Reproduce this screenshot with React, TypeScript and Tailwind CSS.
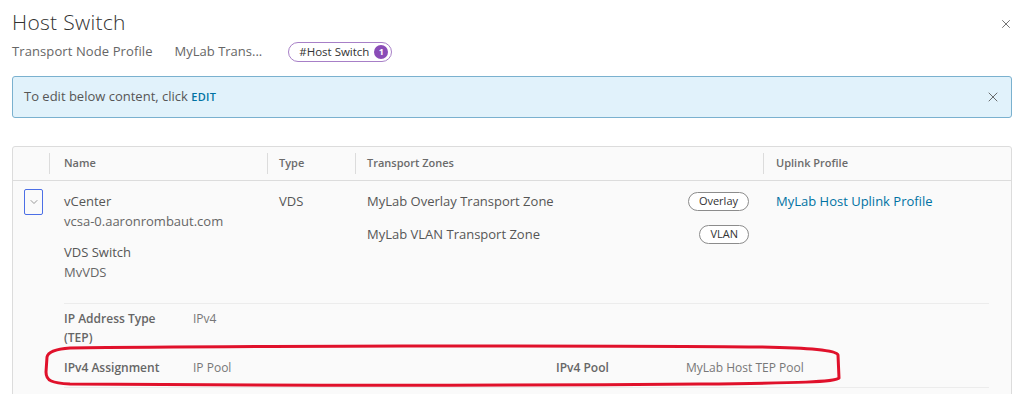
import React from 'react';
import { X, ChevronDown } from 'lucide-react';

const Pill: React.FC<{ label: string }> = ({ label }) => (
  <span className="inline-flex items-center h-[19px] px-[10px] rounded-full border border-[#8c8c8c] text-[11px] text-[#333] bg-white">
    {label}
  </span>
);

const App: React.FC = () => {
  return (
    <div className="relative w-[1024px] h-[394px] overflow-hidden bg-white text-[#565656] font-['Open_Sans',sans-serif]">
      {/* Header */}
      <div className="flex items-start justify-between pl-3 pr-[11px] pt-[7px]">
        <h2 className="text-[21px] leading-[30px] text-[#313131] font-light tracking-[0.3px]">Host Switch</h2>
        <X size={14} strokeWidth={1.4} className="mt-[10px] text-[#555]" />
      </div>

      {/* Breadcrumb tabs */}
      <div className="flex items-center h-[26px] mt-[2px] pl-3 text-[13px] text-[#666]">
        <span className="tracking-[0.1px]">Transport Node Profile</span>
        <span className="ml-[22px]">MyLab Trans...</span>
        <span className="ml-[26px] inline-flex items-center h-[20px] pl-[10px] pr-[3px] rounded-full border border-[#a77fc7] text-[11.5px] text-[#333]">
          #Host Switch
          <span className="ml-[5px] w-[14px] h-[14px] rounded-full bg-[#8a4cb7] text-white text-[9px] font-bold flex items-center justify-center">
            1
          </span>
        </span>
      </div>

      {/* Info alert */}
      <div className="mx-3 mt-[11px] h-[42px] flex items-center justify-between pl-[11px] pr-[10px] rounded-[3px] border border-[#7ab1cf] bg-[#e1f2fb]">
        <span className="text-[13px] text-[#565656]">
          To edit below content, click{' '}
          <span className="text-[11px] font-semibold text-[#0072a3] tracking-[0.3px]">EDIT</span>
        </span>
        <X size={16} strokeWidth={1.3} className="text-[#555]" />
      </div>

      {/* Table */}
      <div className="mx-3 mt-[28px] border border-[#dcdcdc] rounded-[3px] bg-[#fafafa] h-[260px]">
        {/* Header */}
        <div className="grid grid-cols-[37px_218px_88px_408px_1fr] h-[34px] border-b border-[#dcdcdc] text-[11px] font-semibold text-[#6b6b6b]">
          <div className="flex items-center border-r border-[#dcdcdc] my-[6px]" />
          <div className="flex items-center pl-[14px] border-r border-[#dcdcdc] my-[6px]">Name</div>
          <div className="flex items-center pl-[11px] border-r border-[#dcdcdc] my-[6px]">Type</div>
          <div className="flex items-center pl-[11px] border-r border-[#dcdcdc] my-[6px]">Transport Zones</div>
          <div className="flex items-center pl-[12px] my-[6px]">Uplink Profile</div>
        </div>

        {/* Row */}
        <div className="grid grid-cols-[37px_218px_88px_408px_1fr] text-[13px] text-[#565656] pt-[10px]">
          <div className="pl-[11px] -mt-[2px]">
            <div className="w-[19px] h-[26px] border-[1.5px] border-[#4c6fe6] rounded-[2px] flex items-center justify-center">
              <ChevronDown size={12} strokeWidth={1.5} className="text-[#777]" />
            </div>
          </div>
          <div className="pl-[14px] leading-[20px]">
            <div>vCenter</div>
            <div className="text-[#666]">vcsa-0.aaronrombaut.com</div>
            <div className="mt-[11px]">VDS Switch</div>
            <div className="text-[#666]">MvVDS</div>
          </div>
          <div className="pl-[11px] leading-[20px]">VDS</div>
          <div className="pl-[11px] pr-[15px] flex flex-col gap-[13px] leading-[20px]">
            <div className="flex items-center justify-between">
              <span>MyLab Overlay Transport Zone</span>
              <Pill label="Overlay" />
            </div>
            <div className="flex items-center justify-between">
              <span>MyLab VLAN Transport Zone</span>
              <Pill label="VLAN" />
            </div>
          </div>
          <div className="pl-[12px] leading-[20px] text-[#0072a3]">MyLab Host Uplink Profile</div>
        </div>

        {/* Details */}
        <div className="ml-[51px] mr-[22px] mt-[21px] border-t border-[#ececec] text-[12px]">
          <div className="grid grid-cols-[129px_363px_130px_1fr] pt-[5px] leading-[19px]">
            <div className="font-semibold text-[#666]">IP Address Type<br />(TEP)</div>
            <div className="text-[#777]">IPv4</div>
            <div />
            <div />
          </div>
          <div className="grid grid-cols-[129px_363px_130px_1fr] h-[39px] items-center border-b border-[#ececec] mt-[2px]">
            <div className="font-semibold text-[#666]">IPv4 Assignment</div>
            <div className="text-[#777]">IP Pool</div>
            <div className="font-semibold text-[#666]">IPv4 Pool</div>
            <div className="text-[#777]">MyLab Host TEP Pool</div>
          </div>
        </div>
      </div>

      {/* Red annotation */}
      <svg className="absolute inset-0 pointer-events-none" width="1024" height="394" viewBox="0 0 1024 394">
        <path
          d="M70 348 C 200 346, 600 345, 760 347 C 810 348, 836 350, 838 355 L 839 378 C 836 382, 800 383, 700 384 C 450 386, 200 385, 70 384 C 52 383, 46 381, 46 372 L 47 357 C 48 352, 56 349, 70 348 Z"
          fill="none"
          stroke="#e0112b"
          strokeWidth="3"
          strokeLinejoin="round"
        />
      </svg>
    </div>
  );
};

export default App;
